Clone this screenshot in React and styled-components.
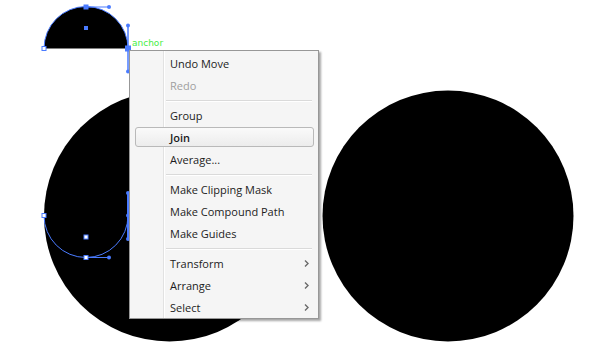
import React from "react";
import styled, { createGlobalStyle } from "styled-components";

const Global = createGlobalStyle`
  html, body { margin: 0; padding: 0; background: #fff; }
  body { font-family: "Open Sans", "Noto Sans", sans-serif; }
`;

const Canvas = styled.div`
  position: relative;
  width: 600px;
  height: 347px;
  overflow: hidden;
  background: #fff;
`;

const Art = styled.svg`
  position: absolute;
  left: 0;
  top: 0;
`;

const Label = styled.span`
  position: absolute;
  left: ${(p) => p.x}px;
  top: ${(p) => p.y}px;
  font-family: "DejaVu Sans", "Liberation Sans", sans-serif;
  font-size: 9px;
  line-height: 11px;
  color: #44ee44;
`;

const Menu = styled.div`
  position: absolute;
  left: 129px;
  top: 50px;
  width: 186px;
  padding: 1px 1px 0 1px;
  background: #f5f5f5;
  border: 1px solid #979797;
  box-shadow: 2px 2px 2px rgba(0, 0, 0, 0.35);
  display: flex;
  flex-direction: column;
`;

const Gutter = styled.div`
  position: absolute;
  left: 33px;
  top: 0;
  bottom: 0;
  width: 1px;
  background: #e2e2e2;
  border-right: 1px solid #ffffff;
`;

const Item = styled.div`
  position: relative;
  height: 22px;
  display: flex;
  align-items: center;
  justify-content: space-between;
  padding: 0 8px 0 39px;
  font-family: "Open Sans", "Noto Sans", sans-serif;
  font-size: 11px;
  font-weight: ${(p) => (p.$active ? 600 : 400)};
  color: ${(p) => (p.$disabled ? "#a0a0a0" : "#1c1c1c")};
  white-space: nowrap;
`;

const Highlight = styled.div`
  position: absolute;
  left: 4px;
  right: 3px;
  top: 1px;
  bottom: 1px;
  border: 1px solid #b9b9b9;
  border-radius: 3px;
  background: linear-gradient(#fafafa, #ececec);
`;

const ItemText = styled.span`
  position: relative;
`;

const Sep = styled.div`
  height: 8px;
  display: flex;
  align-items: center;
  padding: 0 5px 0 35px;
  &::after {
    content: "";
    flex: 1;
    height: 1px;
    background: #dadada;
    box-shadow: 0 1px 0 #ffffff;
  }
`;

const Chevron = () => (
  <svg width="5" height="7" viewBox="0 0 5 7" style={{ position: "relative" }}>
    <path d="M1 0.5 L4 3.5 L1 6.5" fill="none" stroke="#6a6a6a" strokeWidth="1.4" />
  </svg>
);

const items = [
  { t: "Undo Move" },
  { t: "Redo", disabled: true },
  { sep: true },
  { t: "Group" },
  { t: "Join", active: true },
  { t: "Average..." },
  { sep: true },
  { t: "Make Clipping Mask" },
  { t: "Make Compound Path" },
  { t: "Make Guides" },
  { sep: true },
  { t: "Transform", sub: true },
  { t: "Arrange", sub: true },
  { t: "Select", sub: true },
];

const BLUE = "#4a7bff";

const Anchor = ({ x, y, filled, s = 5 }) => (
  <rect
    x={x - s / 2}
    y={y - s / 2}
    width={s}
    height={s}
    fill={filled ? BLUE : "#fff"}
    stroke={BLUE}
    strokeWidth="1"
  />
);

const Dot = ({ x, y }) => <circle cx={x} cy={y} r="2" fill={BLUE} />;

export default function App() {
  return (
    <>
      <Global />
      <Canvas>
        <Art width="600" height="347" viewBox="0 0 600 347">
          <circle cx="169.5" cy="216" r="125.5" fill="#000" />
          <circle cx="448" cy="216" r="125.5" fill="#000" />
          {/* upper half circle */}
          <path d="M44 48.5 A42 42 0 0 1 128 48.5 Z" fill="#000" />
          <path d="M44 48.5 A42 42 0 0 1 128 48.5" fill="none" stroke={BLUE} strokeWidth="1" />
          <line x1="86" y1="7" x2="109" y2="7" stroke={BLUE} strokeWidth="1" />
          <Dot x={109} y={7} />
          <Anchor x={86} y={7} filled s={4} />
          <line x1="128" y1="25.5" x2="128" y2="71.5" stroke={BLUE} strokeWidth="1.5" />
          <Dot x={128} y={25.5} />
          <Dot x={128} y={71.5} />
          <Anchor x={128} y={48.5} filled s={5} />
          <Anchor x={44} y={48.5} s={4} />
          <rect x="84" y="26" width="4" height="4" fill={BLUE} />
          {/* lower half outline */}
          <path d="M44 215.5 A42 42 0 0 0 128 215.5" fill="none" stroke={BLUE} strokeWidth="1" />
          <line x1="86" y1="257.5" x2="109" y2="257.5" stroke={BLUE} strokeWidth="1" />
          <Dot x={109} y={257.5} />
          <Anchor x={86} y={257.5} s={4} />
          <Anchor x={44} y={215.5} s={4} />
          <Anchor x={86} y={237} s={4} />
          <line x1="128" y1="193" x2="128" y2="239" stroke={BLUE} strokeWidth="2" />
          <Dot x={128} y={193} />
          <Dot x={128} y={215.5} />
          <Dot x={128} y={239} />
        </Art>
        <Label x={132} y={38}>anchor</Label>
        <Menu>
          <Gutter />
          {items.map((it, i) =>
            it.sep ? (
              <Sep key={i} />
            ) : (
              <Item key={i} $disabled={it.disabled} $active={it.active}>
                {it.active && <Highlight />}
                <ItemText>{it.t}</ItemText>
                {it.sub && <Chevron />}
              </Item>
            )
          )}
        </Menu>
      </Canvas>
    </>
  );
}
